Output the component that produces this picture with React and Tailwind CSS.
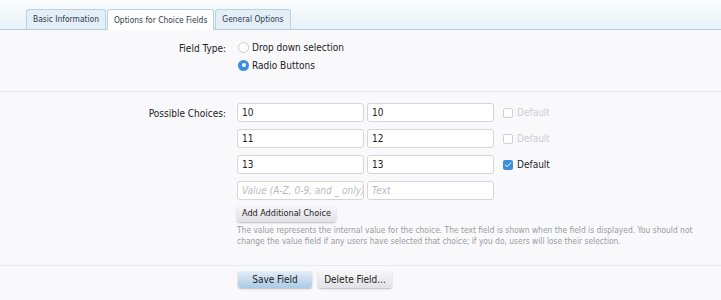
import { Check } from 'lucide-react';

const font = { fontFamily: '"DejaVu Sans Condensed", "Liberation Sans", sans-serif' };

const choices = [
    { value: '10', text: '10', checked: false },
    { value: '11', text: '12', checked: false },
    { value: '13', text: '13', checked: true },
];

function Tab({ label, active }) {
    return (
        <div
            className={
                'px-[6px] flex items-center text-[8.4px] text-[#2b3a48] border border-b-0 border-[#b9d3e6] rounded-t-[3px] ' +
                (active ? 'bg-white -mb-px h-[21px]' : 'bg-[#e3eef7] h-[20px]')
            }
        >
            {label}
        </div>
    );
}

function TextInput({ value, placeholder }) {
    return (
        <div className="w-[127px] h-[19px] bg-white border border-[#d6d6d6] rounded-[3px] px-[4px] flex items-center text-[10px] overflow-hidden whitespace-nowrap">
            {value ? (
                <span className="text-[#222]">{value}</span>
            ) : (
                <span className="text-[#b9b9c4] italic">{placeholder}</span>
            )}
        </div>
    );
}

function DefaultBox({ checked }) {
    return (
        <div className="flex items-center gap-[4px] ml-[6px]">
            {checked ? (
                <span className="w-[10px] h-[10px] rounded-[2px] bg-[#3d8ee0] flex items-center justify-center">
                    <Check size={8} strokeWidth={3} color="#fff" />
                </span>
            ) : (
                <span className="w-[10px] h-[10px] rounded-[2px] border border-[#d0d0d4] bg-white" />
            )}
            <span className={'text-[10px] ' + (checked ? 'text-[#222]' : 'text-[#cdcdd3]')}>Default</span>
        </div>
    );
}

export default function App() {
    return (
        <div className="w-[721px] h-[300px] bg-[#f9f9fc] overflow-hidden" style={font}>
            {/* Tabs */}
            <div className="h-[30px] bg-gradient-to-b from-[#fbfdfe] to-[#e7f1f8] border-b border-[#b2d0e4] flex items-end pl-[26px] gap-px">
                <Tab label="Basic Information" />
                <Tab label="Options for Choice Fields" active />
                <Tab label="General Options" />
            </div>

            {/* Field type */}
            <div className="h-[62px] pt-[10px] grid grid-cols-[226px_1fr] gap-x-[12px] border-b border-[#e6e9ef]">
                <div className="text-right text-[10px] text-[#222] leading-[14px] pt-[2px]">Field Type:</div>
                <div className="flex flex-col gap-[4px] text-[10px] text-[#222]">
                    <div className="flex items-center gap-[3px] h-[14px]">
                        <span className="w-[11px] h-[11px] rounded-full border border-[#c9c9cf] bg-white" />
                        <span>Drop down selection</span>
                    </div>
                    <div className="flex items-center gap-[3px] h-[14px]">
                        <span className="w-[11px] h-[11px] rounded-full bg-[#3d8ee0] flex items-center justify-center">
                            <span className="w-[4px] h-[4px] rounded-full bg-white" />
                        </span>
                        <span>Radio Buttons</span>
                    </div>
                </div>
            </div>

            {/* Possible choices */}
            <div className="h-[174px] pt-[11px] grid grid-cols-[226px_1fr] gap-x-[11px] border-b border-[#e6e9ef]">
                <div className="text-right text-[10px] text-[#222] pt-[3px]">Possible Choices:</div>
                <div className="flex flex-col">
                    <div className="flex flex-col gap-[7px]">
                        {choices.map((c, i) => (
                            <div key={i} className="flex items-center gap-[3px]">
                                <TextInput value={c.value} />
                                <TextInput value={c.text} />
                                <DefaultBox checked={c.checked} />
                            </div>
                        ))}
                        <div className="flex items-center gap-[3px]">
                            <TextInput placeholder="Value (A-Z, 0-9, and _ only)" />
                            <TextInput placeholder="Text" />
                        </div>
                    </div>
                    <button className="mt-[6px] self-start h-[16px] px-[5px] text-[9px] text-[#222] rounded-[3px] bg-gradient-to-b from-[#f6f6f8] to-[#e1e1e6] shadow-[0_1px_2px_rgba(0,0,0,0.25)]">
                        Add Additional Choice
                    </button>
                    <p className="mt-[3px] w-[466px] text-[8.4px] leading-[11px] text-[#9a9aa2]">
                        The value represents the internal value for the choice. The text field is shown when the field is displayed. You should not
                        change the value field if any users have selected that choice; if you do, users will lose their selection.
                    </p>
                </div>
            </div>

            {/* Actions */}
            <div className="pl-[238px] pt-[5px] flex gap-[6px]">
                <button className="w-[74px] h-[17px] text-[10px] text-[#222] rounded-[3px] bg-gradient-to-b from-[#e3eef8] to-[#a9cbe6] shadow-[0_1px_2px_rgba(0,0,0,0.25)]">
                    Save Field
                </button>
                <button className="w-[74px] h-[17px] text-[10px] text-[#222] rounded-[3px] bg-gradient-to-b from-[#f6f6f8] to-[#e1e1e6] shadow-[0_1px_2px_rgba(0,0,0,0.25)]">
                    Delete Field...
                </button>
            </div>
        </div>
    );
}
